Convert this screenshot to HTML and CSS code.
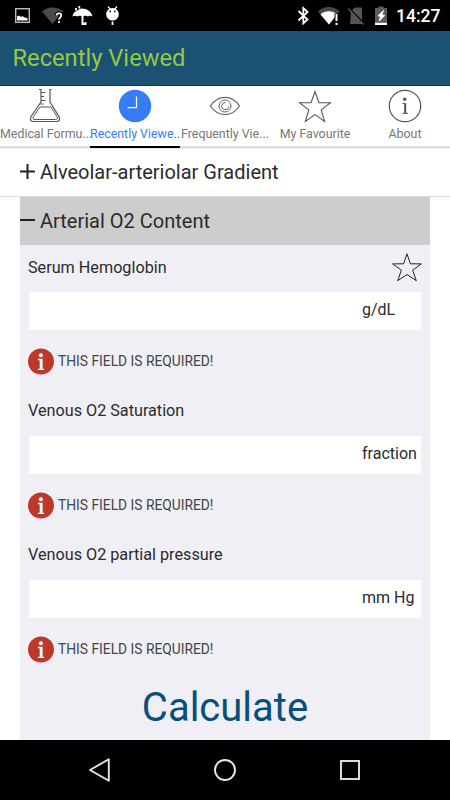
FILE: index.html
```html
<!DOCTYPE html>
<html lang="en">
<head>
    <meta charset="UTF-8">
    <meta name="viewport" content="width=device-width, initial-scale=1.0">
    <title>Recently Viewed</title>
    <link rel="stylesheet" href="styles.css">
</head>
<body>

    <!-- Android status bar -->
    <div class="status-bar">
        <svg class="status-icons" width="130" height="31" viewBox="0 0 130 31">
            <rect x="15.7" y="8.7" width="13.6" height="13.6" fill="none" stroke="#bbb" stroke-width="1.4"/>
            <path d="M17 20.500v-4l2-1 2 1.500 1.500-1 2 1.500 3 .5v2.500z" fill="#fff"/>
            <path d="M42 11.500C47 6.300 58 6.300 63 11.500L52.500 24z" fill="#4a4a4a"/>
            <path d="M56.500 15.500c0-2.800 4.800-2.800 4.800 0 0 1.800-2.300 2-2.300 4.200" fill="none" stroke="#000" stroke-width="4"/>
            <path d="M56.500 15.500c0-2.800 4.800-2.800 4.800 0 0 1.800-2.300 2-2.300 4.200M59 21v2" fill="none" stroke="#fff" stroke-width="1.700"/>
            <path d="M72.500 16.500c1-5 4.500-8 9.500-8s9.500 3 10.500 8c-1.500-1-3.500-1-4.500 0-1.200-1-3-1-4.500-.5h-2.500c-1.500-.5-2.500-.3-3.500.5-1.500-1-3.500-1-5 0z" fill="#fff"/>
            <path d="M82.500 15v9h3v-2" fill="none" stroke="#fff" stroke-width="2"/>
            <path d="M73.500 12l7-4" stroke="#000" stroke-width="1.200"/>
            <path d="M76 8v2.500M79.300 6v2.500" stroke="#fff" stroke-width="1.800"/>
            <path d="M108 6.500l2.500 3M117 6.500l-2.500 3" stroke="#fff" stroke-width="1.200"/>
            <circle cx="112.500" cy="14.300" r="6.300" fill="#fff"/>
            <path d="M112.500 21.500V25" stroke="#fff" stroke-width="1.800"/>
            <path d="M109.500 11.500h1.500M114 11.500h1.500" stroke="#000" stroke-width="1.300"/>
        </svg>
        <svg class="status-icons" width="92" height="31" viewBox="296 0 92 31">
            <path d="M298.500 11l9 8.500-4.200 4V8l4.200 4-9 8.500" fill="none" stroke="#fff" stroke-width="1.800"/>
            <path d="M318 11.500C323.500 5.500 334 5.500 339.500 11.500L329 24.500z" fill="#4a4a4a"/>
            <path d="M320.500 14.500c4.500-4.300 12-4.300 16.500 0L329 24.500z" fill="#fff"/>
            <path d="M336.500 13.500v11.500" stroke="#000" stroke-width="4"/>
            <path d="M336.500 14v7M336.500 22.700v2.200" stroke="#fff" stroke-width="2"/>
            <path d="M351 11l4-3.500h7V24h-12z" fill="#555"/>
            <path d="M348.500 7.500l16 16.500" stroke="#000" stroke-width="1.500"/>
            <path d="M348 8.500L363.500 24.500" stroke="#555" stroke-width="1.400"/>
            <path d="M378.500 6.500h5v1.500h3.500V23h-12V8h3.500z" fill="#5c5c5c"/>
            <path d="M375 22.800h12V25h-12z" fill="#fff"/>
            <path d="M383.500 10.500l-5.500 5.300 2.700.7-1.500 4.500 5.500-5.500-3-.8z" fill="#fff" stroke="#fff"/>
        </svg>
        <span class="clock">14:27</span>
    </div>

    <div class="header">Recently Viewed</div>

    <!-- Tabs -->
    <div class="tabs">
        <div class="tab">
            <svg class="tab-icon" width="34" height="36" viewBox="0 0 34 36" fill="none" stroke="#555">
                <path d="M11 1.500h2v12.500L3 28.500c-1.500 3.500 0 5 3 5h22c3 0 4.500-1.500 3-5L22 14V1.500h1.500" stroke-width="1.200"/>
                <path d="M13 4.500h4.500M13 8.500h3M13 12.500h4.500M12.500 16h3"/>
                <path d="M12 19h11l6 9.500c1.200 2 .3 3-1.500 3H7c-1.800 0-2.700-1-1.500-3z"/>
            </svg>
            <div class="tab-label">Medical Formu...</div>
        </div>
        <div class="tab active">
            <svg class="tab-icon" width="34" height="36" viewBox="0 0 34 36">
                <circle cx="17" cy="18" r="16.200" fill="#377cf4"/>
                <path d="M18.500 10v11.200H9.500" fill="none" stroke="#fff" stroke-width="1.200" transform="translate(0 -1.500)"/>
            </svg>
            <div class="tab-label">Recently Viewe..</div>
        </div>
        <div class="tab">
            <svg class="tab-icon" width="34" height="36" viewBox="0 0 34 36" fill="none" stroke="#666">
                <path d="M2.500 18C10 6.500 24 6.500 31.500 18 24 29.500 10 29.500 2.500 18z" stroke-width="1.200"/>
                <circle cx="17" cy="18" r="6"/>
                <path d="M17.500 14.500a3.600 3.600 0 1 0 3.300 4.200"/>
            </svg>
            <div class="tab-label">Frequently Vie...</div>
        </div>
        <div class="tab">
            <svg class="tab-icon" width="34" height="36" viewBox="0 0 34 36">
                <path d="M17 3.500l3.900 11.200 11.600.1-9.300 7.100 3.400 11.500L17 26.600l-9.600 6.800 3.400-11.500-9.300-7.100 11.600-.1z" fill="none" stroke="#555" stroke-width="1.100"/>
            </svg>
            <div class="tab-label">My Favourite</div>
        </div>
        <div class="tab">
            <svg class="tab-icon" width="34" height="36" viewBox="0 0 34 36">
                <circle cx="17" cy="18" r="15.700" fill="none" stroke="#555" stroke-width="1.200"/>
                <circle cx="16.700" cy="11.300" r="1.700" fill="#555"/>
                <path d="M14.500 15.600h2.700v9.500M14.300 25.300h5.700" fill="none" stroke="#555"/>
                <path d="M17.200 15.200v10" stroke="#555" stroke-width="2"/>
            </svg>
            <div class="tab-label">About</div>
        </div>
    </div>

    <!-- Formula list -->
    <div class="formula">
        <svg width="15" height="16" viewBox="0 0 15 16"><path d="M0 7.500h15M7.500 0v15" stroke="#222" stroke-width="2"/></svg>
        <span>Alveolar-arteriolar Gradient</span>
    </div>
    <div class="formula open">
        <svg width="15" height="16" viewBox="0 0 15 16"><path d="M0 7h15" stroke="#222" stroke-width="2"/></svg>
        <span>Arterial O2 Content</span>
    </div>

    <div class="panel">
        <div class="field">
            <div class="field-label">
                <span>Serum Hemoglobin</span>
                <svg width="30" height="30" viewBox="0 0 30 30"><path d="M15 1.800l3.400 10 11 .1-8.800 6.300 3.700 10.500L15 22.500l-9.300 6.200 3.700-10.500L.6 11.900l11-.1z" fill="none" stroke="#222"/></svg>
            </div>
            <div class="field-box"><span class="unit">g/dL</span></div>
            <div class="error">
                <svg width="27" height="27" viewBox="0 0 27 27"><circle cx="13" cy="13.500" r="13" fill="#b93a2a"/><circle cx="12.900" cy="7.200" r="2" fill="#fff"/><path d="M10 10.700h4.600v10.100h1.400v1.300h-6v-1.300h1.700v-8.500H10z" fill="#fff"/></svg>
                <span>THIS FIELD IS REQUIRED!</span>
            </div>
        </div>
        <div class="field">
            <div class="field-label"><span>Venous O2 Saturation</span></div>
            <div class="field-box"><span class="unit">fraction</span></div>
            <div class="error">
                <svg width="27" height="27" viewBox="0 0 27 27"><circle cx="13" cy="13.500" r="13" fill="#b93a2a"/><circle cx="12.900" cy="7.200" r="2" fill="#fff"/><path d="M10 10.700h4.600v10.100h1.400v1.300h-6v-1.300h1.700v-8.500H10z" fill="#fff"/></svg>
                <span>THIS FIELD IS REQUIRED!</span>
            </div>
        </div>
        <div class="field">
            <div class="field-label"><span>Venous O2 partial pressure</span></div>
            <div class="field-box"><span class="unit">mm Hg</span></div>
            <div class="error">
                <svg width="27" height="27" viewBox="0 0 27 27"><circle cx="13" cy="13.500" r="13" fill="#b93a2a"/><circle cx="12.900" cy="7.200" r="2" fill="#fff"/><path d="M10 10.700h4.600v10.100h1.400v1.300h-6v-1.300h1.700v-8.500H10z" fill="#fff"/></svg>
                <span>THIS FIELD IS REQUIRED!</span>
            </div>
        </div>
        <button class="calculate">Calculate</button>
    </div>

    <!-- Android navigation -->
    <div class="nav-bar">
        <svg width="24" height="26" viewBox="0 0 24 26"><path d="M20.800 2.200v21.600L2 13z" fill="none" stroke="#e6e6e6" stroke-width="1.900" stroke-linejoin="round"/></svg>
        <svg width="24" height="26" viewBox="0 0 24 26"><circle cx="12" cy="13" r="10" fill="none" stroke="#e6e6e6" stroke-width="1.900"/></svg>
        <svg width="24" height="26" viewBox="0 0 24 26"><rect x="3" y="4" width="18" height="18" fill="none" stroke="#e6e6e6" stroke-width="1.900"/></svg>
    </div>

</body>
</html>
```
FILE: styles.css
```css
* {
    margin: 0;
    padding: 0;
    box-sizing: border-box;
    font-family: Roboto, sans-serif;
}

body {
    display: flex;
    flex-direction: column;
    width: 450px;
    height: 800px;
    overflow: hidden;
    background-color: #fff;
    color: #2b2b2b;
}

svg {
    display: block;
    flex: none;
}

.status-bar {
    display: flex;
    align-items: center;
    justify-content: space-between;
    height: 31px;
    padding-right: 10px;
    background-color: #000;
}

.status-icons:first-child {
    margin-right: auto;
}

.clock {
    width: 44px;
    margin-left: 8px;
    color: #fff;
    font-size: 17.5px;
    font-weight: 500;
    line-height: 31px;
    padding-top: 2px;
    white-space: nowrap;
}

.header {
    height: 55px;
    padding-left: 12.5px;
    background-color: #1b5173;
    border-bottom: 1px solid #0c3468;
    color: #97c93c;
    font-size: 23.7px;
    line-height: 54px;
}

.tabs {
    display: flex;
    height: 63px;
    border-bottom: 1px solid #eee;
}

.tab {
    width: 90px;
    height: 62px;
    padding-top: 2px;
    border-bottom: 2px solid #ddd;
    color: #777;
    text-align: center;
}

.tab.active {
    border-bottom-color: #000;
    color: #377cf4;
}

.tab-icon {
    margin: 0 auto;
}

.tab-label {
    font-size: 12.4px;
    line-height: 19px;
    white-space: nowrap;
}

.formula {
    display: flex;
    align-items: center;
    gap: 5px;
    height: 48px;
    padding-left: 20px;
    padding-bottom: 1px;
    border-bottom: 1px solid #ddd;
    font-size: 20px;
}

.formula.open {
    margin: 0 20px;
    padding-left: 0;
    padding-bottom: 0;
    border-bottom: none;
    background-color: #cdcdcd;
}

.panel {
    height: 495px;
    margin: 0 20px;
    background-color: #f0eff5;
}

.field {
    height: 143.9px;
    padding: 0 9px 0 8px;
}

.field-label {
    display: flex;
    align-items: center;
    justify-content: space-between;
    height: 47px;
    padding-bottom: 3px;
    margin-right: -1px;
    font-size: 16.2px;
}

.field-box {
    display: flex;
    align-items: center;
    justify-content: flex-end;
    height: 38px;
    margin-left: 1px;
    padding-bottom: 3px;
    background-color: #fff;
    font-size: 16px;
}

.unit {
    width: 59px;
    white-space: nowrap;
}

.error {
    display: flex;
    align-items: center;
    gap: 3px;
    margin-top: 17.8px;
    color: #444;
    font-size: 13.8px;
}

.calculate {
    display: block;
    margin: 7.3px auto 0;
    border: none;
    background: none;
    color: #094f7a;
    font-size: 40px;
    line-height: 48px;
    cursor: pointer;
}

.nav-bar {
    display: flex;
    align-items: center;
    justify-content: center;
    gap: 101px;
    height: 60px;
    background-color: #000;
}
```
